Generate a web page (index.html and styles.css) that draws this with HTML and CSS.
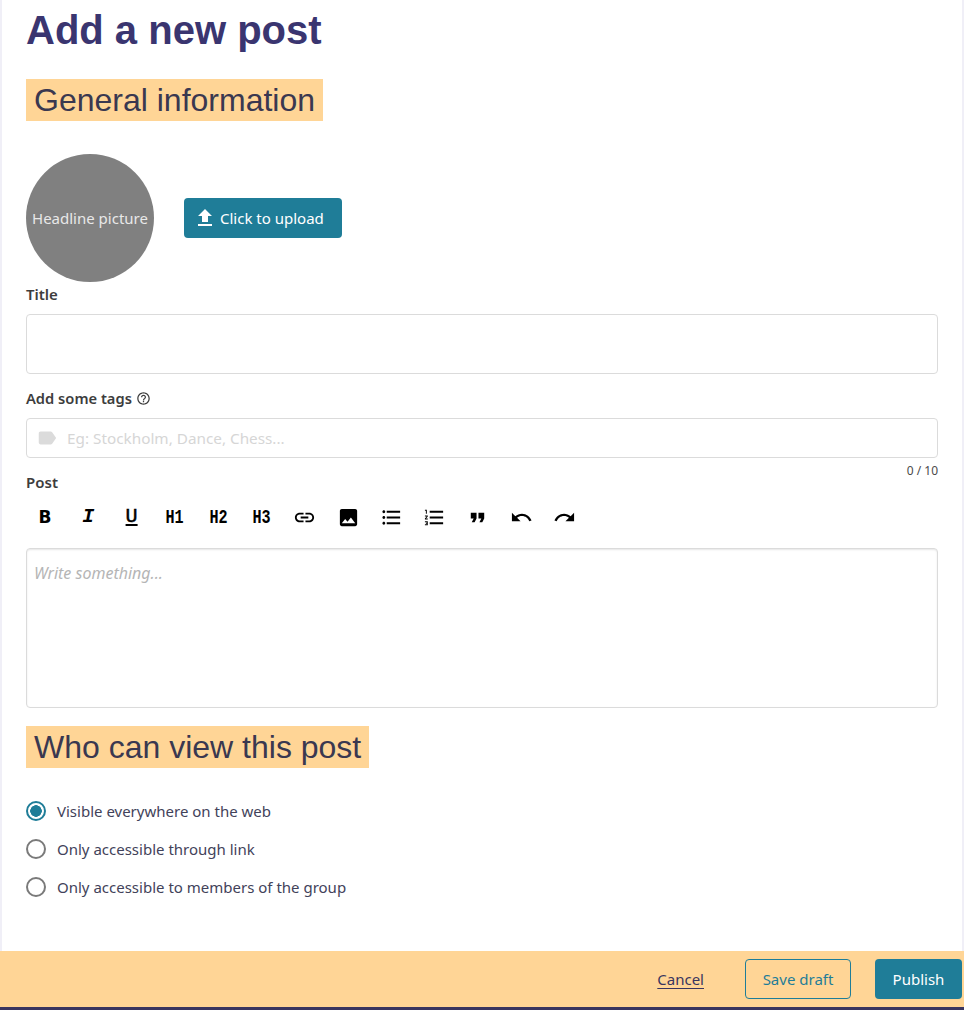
FILE: index.html
```html
<!DOCTYPE html>
<html lang="en">

<head>
    <meta charset="UTF-8">
    <meta name="viewport" content="width=device-width, initial-scale=1.0">
    <title>Add a new post</title>
    <link rel="stylesheet" href="styles.css">
</head>

<body>
    <div class="page">
        <form class="content" action="#!">
            <h1>Add a new post</h1>
            <h2 class="section section-first">General information</h2>

            <div class="picture-row">
                <div class="picture">Headline picture</div>
                <button type="button" class="btn btn-primary btn-upload">
                    <svg class="icon-upload" viewBox="0 0 24 24"><path d="M9 16h6v-6h4l-7-7-7 7h4zm-4 2h14v2H5z"/></svg>
                    Click to upload
                </button>
            </div>

            <label class="field-label label-title">Title</label>
            <input class="input input-title" type="text">

            <label class="field-label label-tags">Add some tags
                <svg class="icon-help" viewBox="0 0 24 24"><path d="M11 18h2v-2h-2v2zm1-16C6.48 2 2 6.48 2 12s4.48 10 10 10 10-4.48 10-10S17.52 2 12 2zm0 18c-4.41 0-8-3.59-8-8s3.59-8 8-8 8 3.59 8 8-3.59 8-8 8zm0-14c-2.21 0-4 1.79-4 4h2c0-1.1.9-2 2-2s2 .9 2 2c0 2-3 1.75-3 5h2c0-2.25 3-2.5 3-5 0-2.21-1.79-4-4-4z"/></svg>
            </label>
            <div class="input tags">
                <svg class="icon-tag" viewBox="0 0 24 24"><path d="M17.63 5.84C17.27 5.33 16.67 5 16 5L5 5.01C3.9 5.01 3 5.9 3 7v10c0 1.1.9 1.99 2 1.99L16 19c.67 0 1.27-.33 1.63-.84L22 12l-4.37-6.16z"/></svg>
                <input class="tags-input" type="text" placeholder="Eg: Stockholm, Dance, Chess...">
            </div>
            <div class="counter">0 / 10</div>

            <label class="field-label label-post">Post</label>
            <div class="toolbar">
                <button type="button" class="tool tool-text tool-b">B</button>
                <button type="button" class="tool tool-text tool-i">I</button>
                <button type="button" class="tool tool-text tool-u">U</button>
                <button type="button" class="tool tool-text tool-h"><span>H1</span></button>
                <button type="button" class="tool tool-text tool-h"><span>H2</span></button>
                <button type="button" class="tool tool-text tool-h"><span>H3</span></button>
                <button type="button" class="tool"><svg viewBox="0 0 24 24"><path d="M3.9 12c0-1.71 1.39-3.1 3.1-3.1h4V7H7c-2.76 0-5 2.24-5 5s2.24 5 5 5h4v-1.9H7c-1.71 0-3.1-1.39-3.1-3.1zM8 13h8v-2H8v2zm9-6h-4v1.9h4c1.71 0 3.1 1.39 3.1 3.1s-1.39 3.1-3.1 3.1h-4V17h4c2.76 0 5-2.24 5-5s-2.24-5-5-5z"/></svg></button>
                <button type="button" class="tool"><svg viewBox="0 0 24 24"><path d="M21 19V5c0-1.1-.9-2-2-2H5c-1.1 0-2 .9-2 2v14c0 1.1.9 2 2 2h14c1.1 0 2-.9 2-2zM8.5 13.5l2.5 3.01L14.5 12l4.5 6H5l3.5-4.5z"/></svg></button>
                <button type="button" class="tool"><svg viewBox="0 0 24 24"><path d="M4 10.5c-.83 0-1.5.67-1.5 1.5s.67 1.5 1.5 1.5 1.5-.67 1.5-1.5-.67-1.5-1.5-1.5zm0-6c-.83 0-1.5.67-1.5 1.5S3.17 7.5 4 7.5 5.5 6.83 5.5 6 4.83 4.5 4 4.5zm0 12c-.83 0-1.5.68-1.5 1.5s.68 1.5 1.5 1.5 1.5-.68 1.5-1.5-.67-1.5-1.5-1.5zM7 19h14v-2H7v2zm0-6h14v-2H7v2zm0-8v2h14V5H7z"/></svg></button>
                <button type="button" class="tool"><svg viewBox="0 0 24 24"><path d="M2 17h2v.5H3v1h1v.5H2v1h3v-4H2v1zm1-9h1V4H2v1h1v3zm-1 3h1.8L2 13.1v.9h3v-1H3.2L5 10.9V10H2v1zm5-6v2h14V5H7zm0 14h14v-2H7v2zm0-6h14v-2H7v2z"/></svg></button>
                <button type="button" class="tool"><svg viewBox="0 0 24 24"><path d="M6 17h3l2-4V7H5v6h3zm8 0h3l2-4V7h-6v6h3z"/></svg></button>
                <button type="button" class="tool"><svg viewBox="0 0 24 24"><path d="M12.5 8c-2.65 0-5.05.99-6.9 2.6L2 7v9h9l-3.62-3.62c1.39-1.16 3.16-1.88 5.12-1.88 3.54 0 6.55 2.31 7.6 5.5l2.37-.78C21.08 11.03 17.15 8 12.5 8z"/></svg></button>
                <button type="button" class="tool"><svg viewBox="0 0 24 24"><path d="M18.4 10.6C16.55 8.99 14.15 8 11.5 8c-4.65 0-8.58 3.03-9.96 7.22L3.9 16c1.05-3.19 4.05-5.5 7.6-5.5 1.95 0 3.73.72 5.12 1.88L13 16h9V7l-3.6 3.6z"/></svg></button>
            </div>
            <div class="editor">Write something...</div>

            <h2 class="section section-second">Who can view this post</h2>

            <div class="radios">
                <label class="radio"><input type="radio" name="visibility" checked> Visible everywhere on the web</label>
                <label class="radio"><input type="radio" name="visibility"> Only accessible through link</label>
                <label class="radio"><input type="radio" name="visibility"> Only accessible to members of the group</label>
            </div>
        </form>

        <div class="footer">
            <a href="#!" class="cancel">Cancel</a>
            <button type="button" class="btn btn-outline">Save draft</button>
            <button type="button" class="btn btn-primary btn-publish">Publish</button>
        </div>
    </div>
</body>

</html>
```

FILE: styles.css
```css
html, body {
    margin: 0;
    height: 1010px;
    overflow: hidden;
}

body {
    background-color: #f0eff7;
    border-bottom: 3px solid #39355f;
    box-sizing: border-box;
    font-family: 'Noto Sans', sans-serif;
    font-size: 15px;
    color: #42425a;
}

.page {
    height: 1007px;
    display: flex;
    flex-direction: column;
}

.content {
    flex: 1;
    margin: 0 2px;
    padding: 0 24px;
    background-color: white;
    display: flex;
    flex-direction: column;
    align-items: stretch;
}

h1 {
    margin: 7px 0 0 0;
    font-family: 'Liberation Sans', Arial, sans-serif;
    font-size: 40px;
    line-height: 46px;
    font-weight: bold;
    color: #3a3570;
}

.section {
    align-self: flex-start;
    margin: 0;
    padding: 0 8px;
    height: 42px;
    line-height: 42px;
    font-family: 'Liberation Sans', Arial, sans-serif;
    font-size: 32px;
    font-weight: normal;
    background-color: #ffd596;
    color: #3a3850;
}

.section-first {
    margin-top: 26px;
}

.section-second {
    margin-top: 18px;
}

.picture-row {
    margin-top: 33px;
    display: flex;
    align-items: center;
    gap: 30px;
}

.picture {
    width: 128px;
    height: 128px;
    border-radius: 50%;
    background-color: #808080;
    color: #e8e8e8;
    display: flex;
    align-items: center;
    justify-content: center;
    white-space: nowrap;
    font-size: 15px;
}

.btn {
    font-family: inherit;
    font-size: 15px;
    height: 40px;
    border-radius: 4px;
    box-sizing: border-box;
    cursor: pointer;
}

.btn-primary {
    background-color: #1f7d98;
    border: none;
    color: white;
}

.btn-upload {
    width: 158px;
    padding: 0 0 0 9px;
    display: flex;
    align-items: center;
    gap: 3px;
}

.icon-upload {
    width: 24px;
    height: 24px;
    fill: white;
}

.field-label {
    display: block;
    font-weight: 600;
    font-size: 15px;
    line-height: 20px;
    color: #3d3d3d;
}

.label-title {
    margin-top: 2px;
}

.label-tags {
    margin-top: 14px;
    display: flex;
    align-items: center;
    gap: 4px;
    font-size: 14.7px;
}

.label-post {
    margin-top: -7px;
}

.icon-help {
    width: 15px;
    height: 15px;
    fill: #3d3d3d;
}

.input {
    border: 1px solid #dbdbdb;
    border-radius: 4px;
    box-sizing: border-box;
    background-color: white;
    margin-top: 10px;
}

.input-title {
    height: 60px;
    width: 100%;
    display: block;
}

.tags {
    height: 40px;
    display: flex;
    align-items: center;
    padding-left: 9px;
    gap: 9px;
}

.icon-tag {
    width: 22px;
    height: 22px;
    fill: #dbdbdb;
}

.tags-input {
    flex: 1;
    border: none;
    outline: none;
    padding: 0;
    font-family: inherit;
    font-size: 15.3px;
}

.tags-input::placeholder {
    color: #d6d6d6;
    opacity: 1;
}

.counter {
    text-align: right;
    font-size: 12px;
    line-height: 16px;
    margin-top: 5px;
    color: #4a4a4a;
}

.toolbar {
    display: flex;
    margin-top: 9px;
}

.tool {
    width: 38px;
    height: 32px;
    margin-right: 5.3px;
    padding: 0;
    border: none;
    background: none;
    color: black;
    display: flex;
    align-items: center;
    justify-content: center;
    flex-shrink: 0;
}

.tool svg {
    width: 23px;
    height: 23px;
    fill: black;
}

.tool-text {
    font-family: 'Liberation Mono', monospace;
    font-weight: bold;
    font-size: 20px;
    line-height: 1;
}

.tool-b {
    font-family: 'DejaVu Sans', sans-serif;
    font-size: 17px;
}

.tool-i {
    font-style: italic;
}

.tool-u {
    text-decoration: underline;
    text-underline-offset: 2px;
    text-decoration-thickness: 2px;
    font-weight: normal;
    -webkit-text-stroke: 0.5px black;
}

.tool-h span {
    display: block;
    font-size: 21px;
    transform: scaleX(0.72);
}

.editor {
    margin-top: 15px;
    height: 160px;
    box-sizing: border-box;
    padding: 14px 7px;
    border: 1px solid #dbdbdb;
    border-radius: 4px;
    box-shadow: inset 0 1px 2px rgba(10, 10, 10, 0.1);
    font-size: 16px;
    font-style: italic;
    line-height: 20px;
    color: #b5b5b5;
}

.radios {
    margin-top: 31px;
    display: flex;
    flex-direction: column;
    gap: 14px;
}

.radio {
    display: flex;
    align-items: center;
    gap: 11px;
    height: 24px;
}

.radio input {
    appearance: none;
    margin: 0;
    width: 20px;
    height: 20px;
    box-sizing: border-box;
    border: 2px solid #7a7a7a;
    border-radius: 50%;
    background-color: white;
}

.radio input:checked {
    border-color: #1f7d98;
    background: radial-gradient(circle, #1f7d98 0, #1f7d98 5.5px, white 6px);
}

.footer {
    height: 56px;
    flex-shrink: 0;
    box-sizing: border-box;
    padding-right: 2px;
    background-color: #ffd596;
    display: flex;
    align-items: center;
    justify-content: flex-end;
}

.cancel {
    color: #39355f;
    text-underline-offset: 3px;
    margin-right: 41px;
}

.btn-outline {
    width: 106px;
    background: none;
    border: 1px solid #1f7d98;
    color: #1f7d98;
    margin-right: 24px;
}

.btn-publish {
    width: 87px;
}
```
